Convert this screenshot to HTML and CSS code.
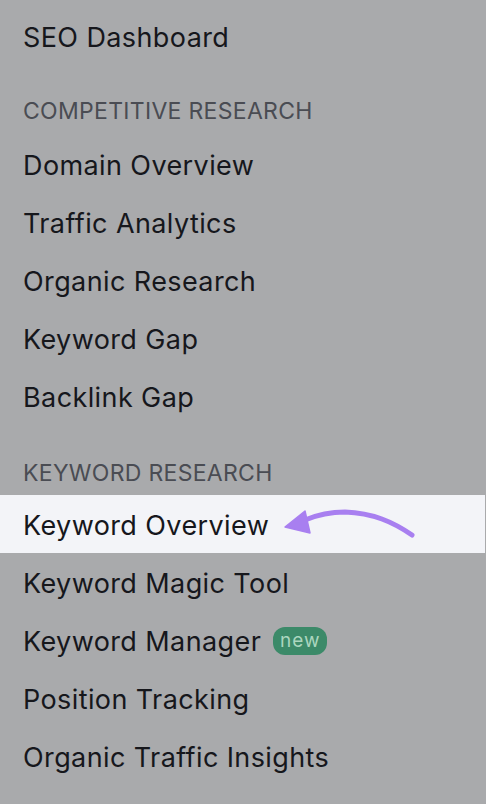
FILE: index.html
```html
<!DOCTYPE html>
<html>
<head>
<meta charset="utf-8">
<link rel="stylesheet" href="styles.css">
</head>
<body>
<nav class="menu">
  <div class="item first">SEO Dashboard</div>
  <div class="section">COMPETITIVE RESEARCH</div>
  <div class="item">Domain Overview</div>
  <div class="item">Traffic Analytics</div>
  <div class="item">Organic Research</div>
  <div class="item">Keyword Gap</div>
  <div class="item">Backlink Gap</div>
  <div class="section second">KEYWORD RESEARCH</div>
  <div class="item active">
    <span>Keyword Overview</span>
    <svg class="arrow" width="140" height="40" viewBox="0 0 140 40">
      <path d="M131 30 C 112 17, 92 8, 64 7 C 48 7, 36 10, 24 15" fill="none" stroke="#a87ff0" stroke-width="5" stroke-linecap="round"/>
      <polygon points="4,22 24,6 29,28" fill="#a87ff0" stroke="#a87ff0" stroke-width="1.5" stroke-linejoin="round"/>
    </svg>
  </div>
  <div class="item">Keyword Magic Tool</div>
  <div class="item">Keyword Manager <span class="badge">new</span></div>
  <div class="item">Position Tracking</div>
  <div class="item">Organic Traffic Insights</div>
</nav>
</body>
</html>
```
FILE: styles.css
```css
html, body {
  margin: 0;
  padding: 0;
  background: #a9aaac;
}
body {
  font-family: Inter, "Noto Sans", sans-serif;
  width: 486px;
  height: 804px;
  overflow: hidden;
}
.menu {
  display: flex;
  flex-direction: column;
  padding-top: 7px;
}
.item {
  height: 58px;
  display: flex;
  align-items: center;
  padding-left: 23px;
  padding-top: 2px;
  box-sizing: border-box;
  font-size: 27px;
  color: #16171c;
  letter-spacing: 0.4px;
}
.section {
  height: 70px;
  box-sizing: border-box;
  padding: 33px 0 0 23px;
  font-size: 23px;
  line-height: 26px;
  color: #4a4c53;
  letter-spacing: 0.3px;
}
.section.second {
  padding-top: 35px;
}
.active {
  background: #f3f4f8;
  width: 485px;
}
.arrow {
  margin-left: 12px;
  flex-shrink: 0;
}
.badge {
  display: inline-flex;
  align-items: center;
  justify-content: center;
  margin-left: 12px;
  width: 54px;
  height: 28px;
  border-radius: 12px;
  background: #3c8a69;
  color: #abd6bf;
  font-size: 19px;
  letter-spacing: 1px;
  padding-bottom: 2px;
  box-sizing: border-box;
}
```
